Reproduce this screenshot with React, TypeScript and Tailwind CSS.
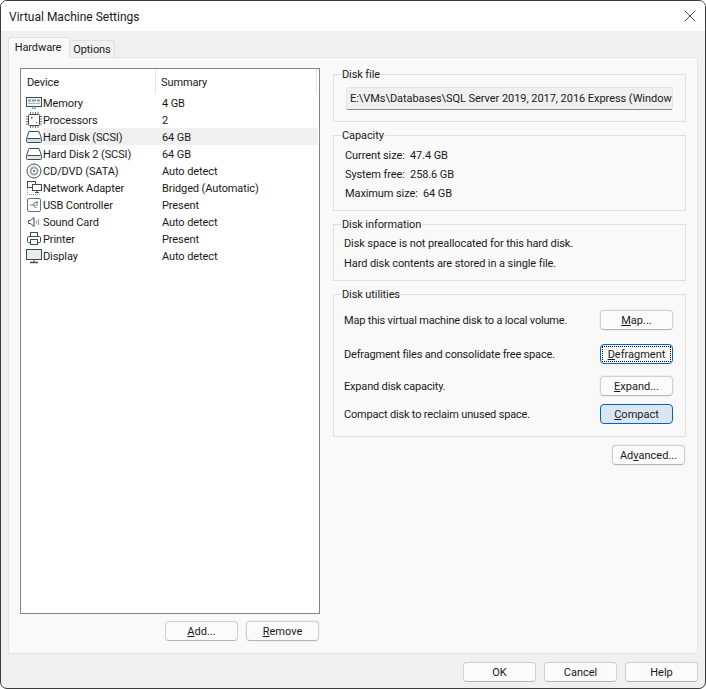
import { X } from "lucide-react"
import type { ReactNode } from "react"

const ink = "#3f4c57"

function MemoryIcon() {
  return (
    <svg width="16" height="16" viewBox="0 0 16 16" fill="none" stroke={ink}>
      <rect x="0.5" y="2.5" width="15" height="9" fill="#f4f6f7" />
      <path d="M2 5.5h3M6 5.5h4M11 5.5h3" strokeWidth="2" stroke="#8b979f" />
      <path d="M2 8.5h12" stroke="#aab3b9" />
      <path d="M6.5 11.5v2h3v-2" stroke="#8b979f" />
    </svg>
  )
}

function CpuIcon() {
  return (
    <svg width="16" height="16" viewBox="0 0 16 16" fill="none" stroke={ink}>
      <path
        d="M4.5 0v3M7 0v3M9.5 0v3M12 0v3M4.5 13v3M7 13v3M9.5 13v3M12 13v3M0 4.5h3M0 7h3M0 9.5h3M0 12h3M13 4.5h3M13 7h3M13 9.5h3M13 12h3"
        stroke="#6b7780"
      />
      <rect x="2.5" y="2.5" width="11" height="11" rx="1" fill="#fff" />
      <path d="M5 5h1.5v1.5H5zM10 10h1v1h-1z" fill={ink} stroke="none" />
    </svg>
  )
}

function DiskIcon({ fill = "#cfe0ec" }: { fill?: string }) {
  return (
    <svg width="16" height="16" viewBox="0 0 16 16" fill="none" stroke={ink}>
      <path d="M0.5 9.5 3 2.5h10l2.5 7" fill="#fff" />
      <rect x="0.5" y="9.5" width="15" height="4" rx="1" fill={fill} />
    </svg>
  )
}

function CdIcon() {
  return (
    <svg width="16" height="16" viewBox="0 0 16 16" fill="none" stroke={ink}>
      <circle cx="8" cy="8" r="7" fill="#fff" />
      <circle cx="8" cy="8" r="3.5" stroke="#9aa5ad" strokeWidth="2" />
      <circle cx="8" cy="8" r="1" fill={ink} stroke="none" />
    </svg>
  )
}

function NetworkIcon() {
  return (
    <svg width="16" height="16" viewBox="0 0 16 16" fill="none" stroke={ink}>
      <path d="M1.5 8v6.5h12" stroke="#8b979f" strokeDasharray="1 1" />
      <rect x="1.5" y="1.5" width="8" height="6" fill="#fff" />
      <rect x="6.5" y="4.5" width="9" height="6" fill="#fff" />
      <path d="M11 10.5v2M9 12.5h4" />
    </svg>
  )
}

function UsbIcon() {
  return (
    <svg width="16" height="16" viewBox="0 0 16 16" fill="none" stroke={ink}>
      <rect x="1.5" y="1.5" width="13" height="13" rx="1.5" fill="#fff" stroke="#66737c" />
      <path d="M4 8h8M6.5 8 8.5 5.5h2M7.5 8l1.5 2.5h1.5" stroke="#77848d" />
      <rect x="10" y="4.5" width="2" height="2" fill="#77848d" stroke="none" />
    </svg>
  )
}

function SpeakerIcon() {
  return (
    <svg width="16" height="16" viewBox="0 0 16 16" fill="none" stroke={ink}>
      <path d="M2.5 6.5h2l3.5-3v9l-3.5-3h-2z" fill="#fff" />
      <path d="M10.5 6.5v3M12.5 5v6" stroke="#8b979f" />
    </svg>
  )
}

function PrinterIcon() {
  return (
    <svg width="16" height="16" viewBox="0 0 16 16" fill="none" stroke={ink}>
      <rect x="4.5" y="1.5" width="7" height="4" fill="#fff" />
      <rect x="1.5" y="5.5" width="13" height="6" rx="1" fill="#fff" />
      <rect x="4.5" y="8.5" width="7" height="5" fill="#fff" />
    </svg>
  )
}

function DisplayIcon() {
  return (
    <svg width="16" height="16" viewBox="0 0 16 16" fill="none" stroke={ink}>
      <rect x="0.5" y="1.5" width="15" height="10" fill="#e9edf0" />
      <path d="M4 14.5h8" strokeWidth="1.5" />
      <path d="M8 12v2" />
    </svg>
  )
}

const devices = [
  { icon: <MemoryIcon />, name: "Memory", summary: "4 GB" },
  { icon: <CpuIcon />, name: "Processors", summary: "2" },
  { icon: <DiskIcon />, name: "Hard Disk (SCSI)", summary: "64 GB", selected: true },
  { icon: <DiskIcon fill="#e4e6e8" />, name: "Hard Disk 2 (SCSI)", summary: "64 GB" },
  { icon: <CdIcon />, name: "CD/DVD (SATA)", summary: "Auto detect" },
  { icon: <NetworkIcon />, name: "Network Adapter", summary: "Bridged (Automatic)" },
  { icon: <UsbIcon />, name: "USB Controller", summary: "Present" },
  { icon: <SpeakerIcon />, name: "Sound Card", summary: "Auto detect" },
  { icon: <PrinterIcon />, name: "Printer", summary: "Present" },
  { icon: <DisplayIcon />, name: "Display", summary: "Auto detect" },
]

function Btn({ children, halo, variant }: { children: ReactNode; halo?: boolean; variant?: "focus" | "hover" }) {
  if (variant === "focus") {
    return (
      <button className="h-5 w-[73px] rounded-[4px] border border-[#0067c0] bg-[#fbfbfb] p-px tracking-normal text-[#1a1a1a]">
        <span className="flex h-full items-center justify-center border border-dotted border-black pt-px">{children}</span>
      </button>
    )
  }
  if (variant === "hover") {
    return (
      <button className="flex h-5 w-[73px] items-center justify-center rounded-[4px] border border-[#0067c0] bg-[#dae6f1] pt-px tracking-normal text-[#1a1a1a]">
        {children}
      </button>
    )
  }
  return (
    <button
      className={
        "flex h-5 w-[73px] items-center justify-center rounded-[4px] border border-[#d0d0d0] border-b-[#b4b4b4] bg-[#fbfbfb] pt-px tracking-normal text-[#1a1a1a] " +
        (halo ? "ring-1 ring-[#f0f0f0]" : "")
      }
    >
      {children}
    </button>
  )
}

function Group({ title, className, children }: { title: string; className?: string; children: ReactNode }) {
  return (
    <fieldset className={"border border-[#dfdfdf] " + (className ?? "")}>
      <legend className="ml-[7px] translate-y-px px-px leading-4 text-[#1a1a1a]">{title}</legend>
      {children}
    </fieldset>
  )
}

function UtilityRow({ text, className, children }: { text: string; className?: string; children: ReactNode }) {
  return (
    <div className={"flex items-center justify-between pl-[10px] pr-[12px] " + (className ?? "")}>
      <span className="pt-[2px] tracking-[-0.18px]">{text}</span>
      {children}
    </div>
  )
}

export default function App() {
  return (
    <div className="flex h-[689px] w-[706px] flex-col overflow-hidden rounded-[7px] border border-[#3a3a3a] bg-[#f0f0f0] font-['Roboto','Noto_Sans',sans-serif] text-[11px] leading-4 tracking-[-0.1px] text-[#1a1a1a]">
      <header className="flex h-[30px] shrink-0 items-center justify-between bg-white pl-2 pr-[5px]">
        <span className="pt-px text-[12px] tracking-normal">Virtual Machine Settings</span>
        <X size={20} strokeWidth={1} className="text-[#222]" />
      </header>

      <div className="flex h-[26px] shrink-0 items-end pl-[7px]">
        <div className="z-10 -mb-px flex h-[21px] w-[62px] items-center justify-center rounded-t-[3px] border border-b-0 border-[#e0e0e0] bg-[#f9f9f9] pr-[2px]">
          Hardware
        </div>
        <div className="flex h-[17px] w-[45px] items-center justify-center rounded-t-[3px] border border-b-0 border-l-0 border-[#e0e0e0] bg-[#f0f0f0] pt-px">
          Options
        </div>
      </div>

      <main className="ml-[7px] flex h-[597px] w-[690px] shrink-0 border border-[#e5e5e5] bg-[#f9f9f9]">
        <section className="ml-[11px] mt-[10px] flex w-[300px] flex-col">
          <div className="h-[546px] border border-[#848484] bg-white">
            <div className="flex h-[25px] items-center">
              <span className="w-[135px] self-stretch border-r border-[#e5e5e5] pl-[6px] pt-[6px]">Device</span>
              <span className="mr-[2px] flex-1 self-stretch border-r border-[#e5e5e5] pl-[5px] pt-[6px]">Summary</span>
            </div>
            {devices.map((d) => (
              <div key={d.name} className="flex h-[17px] items-center">
                <span className="ml-[5px] flex w-[17px] shrink-0 items-center">{d.icon}</span>
                <div className={"mr-px flex h-full flex-1 items-center pt-[3px] " + (d.selected ? "bg-[#f0f0f0]" : "")}>
                  <span className="w-[119px]">{d.name}</span>
                  <span>{d.summary}</span>
                </div>
              </div>
            ))}
          </div>
          <div className="mt-[7px] flex justify-end gap-2 pr-px">
            <Btn>
              <u>A</u>dd...
            </Btn>
            <Btn halo>
              <u>R</u>emove
            </Btn>
          </div>
        </section>

        <section className="ml-[13px] mt-[8px] flex w-[353px] flex-col">
          <Group title="Disk file" className="h-[56px]">
            <div className="ml-[12px] mt-[5px] flex h-[23px] w-[327px] items-center overflow-hidden whitespace-nowrap rounded-[2px] border border-[#e6e6e6] border-b-[#8a8a8a] bg-[#f0f0f0] px-[3px] pt-px tracking-[-0.05px]">
              E:\VMs\Databases\SQL Server 2019, 2017, 2016 Express (Window
            </div>
          </Group>
          <Group title="Capacity" className="mt-[5px] h-[84px]">
            <div className="ml-[11px] mt-[5px] flex flex-col gap-[3px]">
              <p>Current size:&nbsp; 47.4 GB</p>
              <p>System free:&nbsp; 258.6 GB</p>
              <p>Maximum size:&nbsp; 64 GB</p>
            </div>
          </Group>
          <Group title="Disk information" className="mt-[5px] h-[65px]">
            <div className="ml-[10px] mt-[4px] flex flex-col gap-[4px]">
              <p>Disk space is not preallocated for this hard disk.</p>
              <p>Hard disk contents are stored in a single file.</p>
            </div>
          </Group>
          <Group title="Disk utilities" className="mt-[5px] h-[151px]">
            <UtilityRow text="Map this virtual machine disk to a local volume." className="mt-[8px]">
              <Btn halo>
                <u>M</u>ap...
              </Btn>
            </UtilityRow>
            <UtilityRow text="Defragment files and consolidate free space." className="mt-[14px]">
              <Btn variant="focus">
                <span>
                  <u>D</u>efragment
                </span>
              </Btn>
            </UtilityRow>
            <UtilityRow text="Expand disk capacity." className="mt-[12px]">
              <Btn halo>
                <u>E</u>xpand...
              </Btn>
            </UtilityRow>
            <UtilityRow text="Compact disk to reclaim unused space." className="mt-[8px]">
              <Btn variant="hover">
                <span>
                  <u>C</u>ompact
                </span>
              </Btn>
            </UtilityRow>
          </Group>
          <div className="mt-[8px] flex justify-end pr-px">
            <Btn halo>
              <span>
                Ad<u>v</u>anced...
              </span>
            </Btn>
          </div>
        </section>
      </main>

      <footer className="flex flex-1 items-start justify-end gap-2 pr-[7px] pt-2">
        <Btn>OK</Btn>
        <Btn>Cancel</Btn>
        <Btn>Help</Btn>
      </footer>
    </div>
  )
}
